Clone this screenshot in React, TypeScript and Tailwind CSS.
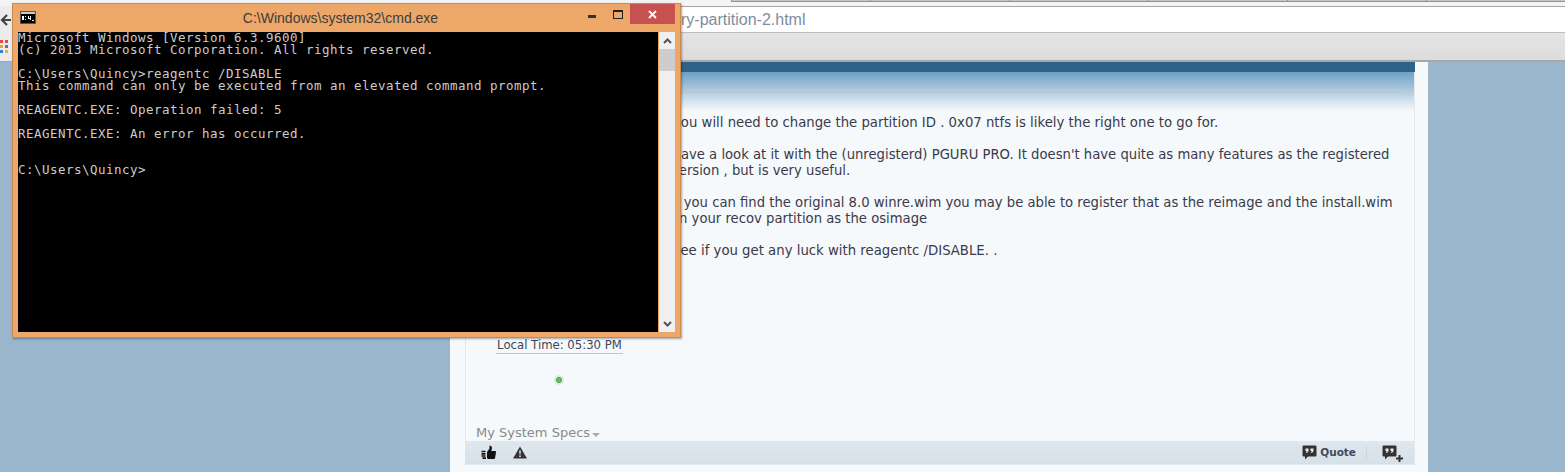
const consoleLines = [
  "Microsoft Windows [Version 6.3.9600]",
  "(c) 2013 Microsoft Corporation. All rights reserved.",
  "",
  "C:\\Users\\Quincy>reagentc /DISABLE",
  "This command can only be executed from an elevated command prompt.",
  "",
  "REAGENTC.EXE: Operation failed: 5",
  "",
  "REAGENTC.EXE: An error has occurred.",
  "",
  "",
  "C:\\Users\\Quincy>",
];

const tabs = [0, 1, 2, 3, 4, 5];

function CmdIcon() {
  return (
    <svg width="16" height="13" viewBox="0 0 16 13">
      <rect x="0.5" y="0.5" width="15" height="12" fill="#c8ccd0" stroke="#555" />
      <rect x="1" y="3" width="14" height="9" fill="#000" />
      <rect x="2" y="5" width="2" height="4" fill="#fff" />
      <rect x="5" y="5" width="1" height="1" fill="#fff" />
      <rect x="5" y="8" width="1" height="1" fill="#fff" />
      <rect x="8" y="5" width="1" height="3" fill="#fff" />
      <rect x="10" y="5" width="1" height="4" fill="#fff" />
      <rect x="8" y="7" width="3" height="1" fill="#fff" />
      <rect x="12" y="9" width="2" height="1" fill="#fff" />
    </svg>
  );
}

function QuoteBubble() {
  return (
    <svg width="15" height="15" viewBox="0 0 15 15">
      <path d="M1.5 0.5h12a1 1 0 0 1 1 1v9a1 1 0 0 1-1 1H6l-3 3v-3H1.5a1 1 0 0 1-1-1v-9a1 1 0 0 1 1-1z" fill="#333" />
      <path d="M3.5 3.5h3v2.5l-1.5 2h-1l0.8-2H3.5zM8.5 3.5h3v2.5l-1.5 2h-1l0.8-2H8.5z" fill="#e8eef2" />
    </svg>
  );
}

function CmdWindow() {
  return (
    <div className="absolute left-[12px] top-[3px] w-[669px] h-[335px] bg-[#eda768] border border-[#c98a52] shadow-[1px_1px_2px_rgba(0,0,0,0.35)] flex flex-col px-[5px] pb-[5px]">
      <div className="h-[28px] shrink-0 flex items-center">
        <div className="ml-[2px] mt-[-1px] flex"><CmdIcon /></div>
        <div className="flex-1 text-center text-[14px] text-[#3d3d3d] pl-[68px] mt-[1px] font-['Liberation_Sans',sans-serif]">C:\Windows\system32\cmd.exe</div>
        <div className="flex items-start self-start h-[20px]">
          <div className="w-[29px] h-[20px] flex justify-center"><div className="w-[8px] h-[3px] bg-[#333] mt-[11px]" /></div>
          <div className="w-[24px] h-[20px] flex justify-center"><div className="w-[10px] h-[9px] border border-t-2 border-[#222] mt-[6px]" /></div>
          <div className="w-[45px] h-[20px] bg-[#c75050] flex items-center justify-center">
            <svg width="9" height="9" viewBox="0 0 9 9"><path d="M1 1l7 7M8 1l-7 7" stroke="#fff" strokeWidth="1.8" /></svg>
          </div>
        </div>
      </div>
      <div className="flex-1 flex min-h-0">
        <div className="flex-1 bg-black font-['DejaVu_Sans_Mono',monospace] text-[12.5px] tracking-[0.475px] leading-[12px] text-[#cccccc] whitespace-pre font-medium">
          {consoleLines.map((l, i) => (
            <div key={i} className="h-[12px]">{l}</div>
          ))}
        </div>
        <div className="w-[16px] ml-[1px] bg-[#f0f0f0] flex flex-col">
          <div className="h-[17px] flex items-center justify-center">
            <svg width="9" height="6" viewBox="0 0 9 6"><path d="M1 5l3.5-3.5L8 5" fill="none" stroke="#555" strokeWidth="2" /></svg>
          </div>
          <div className="h-[22px] bg-[#cdcdcd]" />
          <div className="flex-1" />
          <div className="h-[17px] flex items-center justify-center">
            <svg width="9" height="6" viewBox="0 0 9 6"><path d="M1 1l3.5 3.5L8 1" fill="none" stroke="#555" strokeWidth="2" /></svg>
          </div>
        </div>
      </div>
    </div>
  );
}

function Sidebar() {
  return (
    <div className="absolute left-0 top-[6px] w-[12px] h-[55px] bg-[#ececec]">
      <svg className="absolute left-0 top-[7px]" width="12" height="14" viewBox="0 0 12 14">
        <path d="M11 7H2M7 2L2 7l5 5" fill="none" stroke="#444" strokeWidth="2.2" />
      </svg>
      <div className="absolute left-0 top-[34px] grid grid-cols-2 gap-x-[2px] gap-y-[2px] w-[8px]">
        <div className="h-[3px] bg-[#e04a3a]" />
        <div className="h-[3px] bg-[#e04a3a]" />
        <div className="h-[3px] bg-[#f0a030]" />
        <div className="h-[3px] bg-[#2f80d0]" />
        <div className="h-[3px] bg-[#2f80d0]" />
        <div className="h-[3px] bg-[#f0b030]" />
      </div>
    </div>
  );
}

export default function App() {
  return (
    <div className="relative w-[1565px] h-[472px] overflow-hidden bg-[#9ab6cc] font-['DejaVu_Sans',sans-serif]">
      <div className="h-[7px] bg-[#f4f4f4] border-b border-[#a5a5a5] flex items-start pl-[731px]">
        {tabs.map((t) => (
          <div key={t} className="w-[146px] h-[2px] bg-[#c4c7cb] border-b border-l border-[#8f9399]" />
        ))}
      </div>
      <div className="h-[26px] bg-white border-b border-[#bdbdbd] flex items-center pl-[633px] text-[16px] text-[#7f8c9e] font-['Liberation_Sans',sans-serif]">
        recovery-partition-2.html
      </div>
      <div className="h-[29px] bg-gradient-to-b from-[#e4e4e4] to-[#dcdcdc] border-b-2 border-[#a8a8a8]" />
      <Sidebar />

      <div className="ml-[450px] w-[978px] h-[410px] bg-[#f5f9fb] px-[15px] flex flex-col">
        <div className="w-[950px] h-[403px] flex flex-col border-r border-[#e4e8ec] border-l">
          <div className="h-[10px] bg-[#2e6288] shrink-0 -mx-px" />
          <div className="h-[39px] shrink-0 bg-gradient-to-b from-[#6fa0c4] to-[#f5f9fb] relative">
            <div className="absolute left-0 right-[10px] top-[20px] h-px bg-[#b8c4cc]" />
          </div>
          <div className="flex flex-1 min-h-0">
            <div className="w-[205px] shrink-0 flex flex-col items-center text-[11.7px] text-[#444458]">
              <div className="mt-[227px] ml-[-18px] border-b border-[#bcc6ce] px-[1px] leading-[15px]">Local Time: 05:30 PM</div>
              <div className="mt-[21px] ml-[-20px] w-[10px] h-[10px] rounded-full bg-[#dcecdc] flex items-center justify-center">
                <div className="w-[6px] h-[6px] rounded-full bg-[#6cbf6c] border border-[#4a9a4a]" />
              </div>
            </div>
            <div className="flex-1 pr-[18px] text-[13.2px] leading-[16px] text-[#3a3a4a] pt-[4px]">
              <p className="mb-[16px] ml-[2px] text-[13.25px]">you will need to change the partition ID . 0x07 ntfs is likely the right one to go for.</p>
              <p className="mb-[16px]">Have a look at it with the (unregisterd) PGURU PRO. It doesn't have quite as many features as the registered version , but is very useful.</p>
              <p className="mb-[16px]">If you can find the original 8.0 winre.wim you may be able to register that as the reimage and the install.wim on your recov partition as the osimage</p>
              <p className="ml-[1px] text-[13.27px]">See if you get any luck with reagentc /DISABLE. .</p>
            </div>
          </div>
          <div className="shrink-0 pl-[10px] text-[13px] leading-[16px] text-[#8a8a8a] flex items-center h-[16px]">
            My System Specs
            <span className="ml-[2px] mt-[3px] w-0 h-0 border-x-[4px] border-x-transparent border-t-[4px] border-t-[#aaa]" />
          </div>
          <div className="shrink-0 -ml-px h-[24px] bg-gradient-to-b from-[#e0e8ee] to-[#d6e0e7] border-b border-[#e4e8ec] flex items-center pl-[16px] pr-[11px]">
            <svg width="15" height="15" viewBox="0 0 15 15">
              <path d="M6 7l2.5-3.5V0.5c1.5 0 2.5 1 2.5 2.5L10.3 6H14a1 1 0 0 1 1 1.2l-1 6a1 1 0 0 1-1 .8H7l-1-1z" fill="#111" />
              <path d="M0.5 6.5h4M0.5 8.8h4M0.5 11h4M1.5 13.2h3.5" stroke="#111" strokeWidth="1.7" />
            </svg>
            <svg className="ml-[17px]" width="14" height="13" viewBox="0 0 14 13">
              <path fillRule="evenodd" d="M7 0.5L14 12.5H0zM6.2 4.5h1.6l-.2 4H6.4zM6.2 9.4h1.6v1.5H6.2z" fill="#333" />
            </svg>
            <div className="flex-1" />
            <QuoteBubble />
            <span className="ml-[3px] text-[10.5px] font-bold text-[#3f4a5c]">Quote</span>
            <div className="w-px h-[14px] bg-[#cfd8de] ml-[10px] mr-[15px]" />
            <div className="relative w-[21px] h-[15px]">
              <QuoteBubble />
              <svg className="absolute right-0 bottom-[-2px]" width="7" height="7" viewBox="0 0 7 7"><path d="M3.5 0v7M0 3.5h7" stroke="#333" strokeWidth="2" /></svg>
            </div>
          </div>
        </div>
      </div>
      <CmdWindow />
    </div>
  );
}
